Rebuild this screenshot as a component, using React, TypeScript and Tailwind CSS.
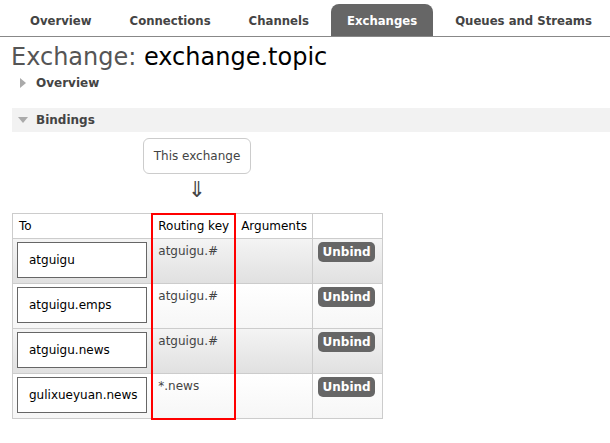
const tabs = ['Overview', 'Connections', 'Channels', 'Exchanges', 'Queues and Streams'];

const bindings = [
  { to: 'atguigu', key: 'atguigu.#' },
  { to: 'atguigu.emps', key: 'atguigu.#' },
  { to: 'atguigu.news', key: 'atguigu.#' },
  { to: 'gulixueyuan.news', key: '*.news' },
];

export default function App() {
  return (
    <div className="w-[610px] h-[443px] overflow-hidden bg-white text-[#444] font-['DejaVu_Sans',Verdana,sans-serif] text-[12px]">
      {/* Tabs */}
      <div className="flex gap-[6px] pl-[14px] pt-[4px] border-b border-[#888] h-[37px]">
        {tabs.map((t) => (
          <div
            key={t}
            className={`h-[32px] px-[16px] pt-[3px] flex items-center font-bold text-[11.7px] whitespace-nowrap rounded-t-[8px] ${
              t === 'Exchanges' ? 'bg-[#666] text-white' : 'text-[#444]'
            }`}
          >
            {t}
          </div>
        ))}
      </div>

      {/* Title */}
      <h1 className="pl-[11px] mt-[4px] text-[24px] leading-[32px] text-[#555] whitespace-nowrap">
        Exchange: <span className="text-black">exchange.topic</span>
      </h1>

      {/* Overview collapsed */}
      <div className="flex items-center h-[24px] -mt-[2px] pl-[20px]">
        <span className="w-0 h-0 border-y-[5px] border-y-transparent border-l-[6px] border-l-[#aaa]" />
        <span className="ml-[10px] font-bold text-[12px]">Overview</span>
      </div>

      {/* Bindings header */}
      <div className="ml-[12px] mt-[13px] h-[24px] bg-[#f2f2f2] flex items-center pl-[6px]">
        <span className="w-0 h-0 border-x-[5px] border-x-transparent border-t-[6px] border-t-[#aaa]" />
        <span className="ml-[8px] font-bold text-[12px]">Bindings</span>
      </div>

      {/* This exchange */}
      <div className="ml-[143px] mt-[6px] w-[108px] h-[36px] border border-[#ccc] rounded-[6px] flex items-center justify-center text-[12px] text-[#444]">
        This exchange
      </div>
      <div className="ml-[143px] w-[108px] text-center text-[22px] leading-[26px] text-[#444] mt-[3px]">⇓</div>

      {/* Table */}
      <div className="relative ml-[12px] mt-[10px] w-[371px]">
        <table className="border-collapse text-[12px] w-[371px] whitespace-nowrap">
          <thead>
            <tr className="h-[25px] bg-white">
              <th className="w-[140px] border border-[#ccc] text-left font-normal text-black px-[6px]">To</th>
              <th className="w-[83px] border border-[#ccc] text-left font-normal text-black px-[6px]">Routing key</th>
              <th className="w-[77px] border border-[#ccc] text-left font-normal text-black px-[5px]">Arguments</th>
              <th className="w-[71px] border border-[#ccc]" />
            </tr>
          </thead>
          <tbody>
            {bindings.map((b, i) => (
              <tr
                key={i}
                className={`h-[45px] ${
                  i % 2 === 0
                    ? 'bg-linear-to-b from-[#f4f4f4] to-[#e0e0e0]'
                    : 'bg-linear-to-b from-white to-[#f6f6f6]'
                }`}
              >
                <td className="border border-[#ccc] p-0 align-top">
                  <div className="ml-[4px] mt-[3px] w-[130px] h-[36px] border border-[#666] bg-white flex items-center pl-[11px] text-black">
                    {b.to}
                  </div>
                </td>
                <td className="border border-[#ccc] align-top px-[6px] pt-[3px] text-[#444]">{b.key}</td>
                <td className="border border-[#ccc]" />
                <td className="border border-[#ccc] align-top p-0">
                  <div className="ml-[5px] mt-[3px] w-[57px] h-[20px] rounded-[5px] bg-[#666] text-white font-bold text-[12px] flex items-center justify-center">
                    Unbind
                  </div>
                </td>
              </tr>
            ))}
          </tbody>
        </table>
        <div className="absolute left-[139px] top-0 w-[85px] h-[207px] border-2 border-[#f00]" />
      </div>
    </div>
  );
}
